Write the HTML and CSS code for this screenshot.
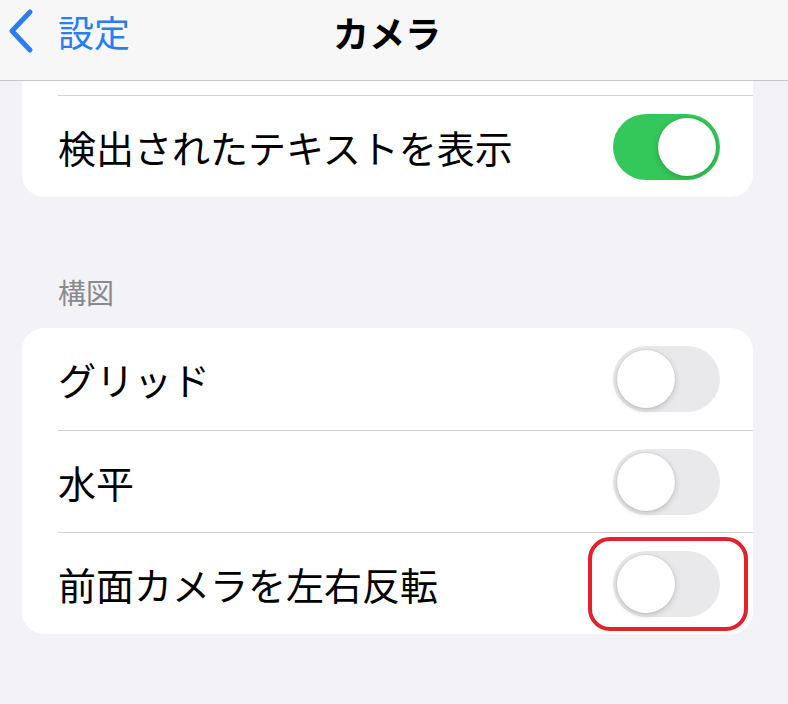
FILE: index.html
```html
<!DOCTYPE html>
<html lang="ja">
<head>
  <meta charset="UTF-8" />
  <title>カメラ</title>
  <link rel="stylesheet" href="styles.css">
</head>
<body>
  <!-- Navigation bar -->
  <div class="navbar">
    <div class="back">
      <svg class="chevron" width="30" height="46" viewBox="0 0 30 46">
        <path d="M24 4 L6 23 L24 42" fill="none" stroke="#2a7ef4" stroke-width="5" stroke-linecap="round" stroke-linejoin="round"/>
      </svg>
      <span class="back-label">設定</span>
    </div>
    <div class="title">カメラ</div>
  </div>

  <div class="content">
    <div class="card cut">
      <div class="row-top"></div>
      <div class="row">
        <span class="label">検出されたテキストを表示</span>
        <span class="toggle on"><span class="knob"></span></span>
      </div>
    </div>

    <div class="section-header">構図</div>

    <div class="card">
      <div class="row">
        <span class="label">グリッド</span>
        <span class="toggle"><span class="knob"></span></span>
      </div>
      <div class="row">
        <span class="label">水平</span>
        <span class="toggle"><span class="knob"></span></span>
      </div>
      <div class="row">
        <span class="label">前面カメラを左右反転</span>
        <span class="toggle marked"><span class="knob"></span></span>
      </div>
    </div>
  </div>
</body>
</html>
```

FILE: styles.css
```css
body {
  margin: 0;
  background-color: #f2f2f7;
  font-family: "Noto Sans CJK JP", "Noto Sans", sans-serif;
  color: #000;
}
.navbar {
  height: 80px;
  background-color: #f7f7f7;
  border-bottom: 1px solid #c6c6c8;
  position: relative;
  display: flex;
  align-items: center;
  justify-content: center;
}
.back {
  position: absolute;
  left: 6px;
  top: 8px;
  display: flex;
  align-items: center;
  gap: 22px;
}
.back-label {
  color: #2a7ef4;
  font-size: 36px;
  line-height: 46px;
}
.title {
  font-size: 36px;
  font-weight: bold;
  line-height: 48px;
  margin-bottom: 16px;
  margin-left: -14px;
}
.content {
  padding: 0 35px 0 22px;
}
.card {
  background-color: #fff;
  border-radius: 22px;
  overflow: hidden;
}
.card.cut {
  border-radius: 0 0 22px 22px;
}
.row-top {
  height: 14px;
}
.row {
  height: 101px;
  margin-left: 36px;
  padding-right: 33px;
  display: flex;
  align-items: center;
  justify-content: space-between;
  border-top: 1px solid #d1d1d6;
}
.card:not(.cut) .row:first-child {
  border-top: none;
  height: 102px;
}
.label {
  font-size: 38px;
  line-height: 48px;
}
.section-header {
  color: #8a8a8e;
  font-size: 28px;
  line-height: 40px;
  padding: 75px 0 16px 36px;
}
.toggle {
  position: relative;
  width: 107px;
  height: 66px;
  border-radius: 33px;
  background-color: #e9e9eb;
  flex-shrink: 0;
}
.toggle.on {
  background-color: #34c759;
}
.knob {
  position: absolute;
  top: 4px;
  left: 4px;
  width: 58px;
  height: 58px;
  border-radius: 50%;
  background-color: #fff;
  box-shadow: 0 2px 6px rgba(0, 0, 0, 0.18), 0 0 0 1px rgba(0, 0, 0, 0.04);
}
.toggle.on .knob {
  left: auto;
  right: 4px;
}
.toggle.marked::after {
  content: "";
  position: absolute;
  left: -25px;
  top: -14px;
  width: 152px;
  height: 86px;
  border: 4px solid #e3202b;
  border-radius: 22px;
}
```
